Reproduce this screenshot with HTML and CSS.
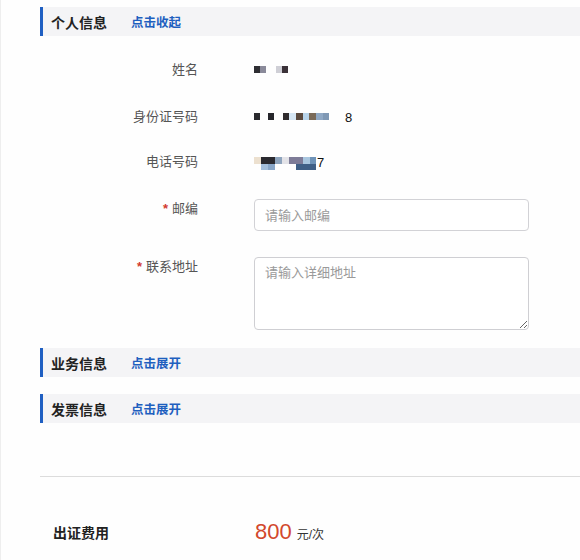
FILE: index.html
```html
<!DOCTYPE html>
<html lang="zh-CN">
<head>
<meta charset="utf-8">
<title>个人信息</title>
<link rel="stylesheet" href="styles.css">
</head>
<body>
<div class="page">
  <div class="sec-head first">
    <span class="sec-title">个人信息</span>
    <a class="sec-link">点击收起</a>
  </div>

  <div class="form">
    <div class="row r1">
      <div class="label">姓名</div>
      <div class="value">
        <svg width="40" height="8" viewBox="0 0 40 8" class="mosaic">
          <rect x="0" y="0" width="6" height="7" fill="#2e2e33"/>
          <rect x="6" y="0" width="6" height="7" fill="#8a8a9a"/>
          <rect x="22" y="0" width="6" height="7" fill="#cfcfd6"/>
          <rect x="28" y="0" width="6" height="7" fill="#3b3238"/>
        </svg>
      </div>
    </div>
    <div class="row r2">
      <div class="label">身份证号码</div>
      <div class="value">
        <svg width="76" height="8" viewBox="0 0 76 8" class="mosaic">
          <rect x="0" y="0" width="6" height="7" fill="#2a2a2e"/>
          <rect x="14" y="0" width="6" height="7" fill="#26262b"/>
          <rect x="29" y="0" width="6" height="7" fill="#2f2b2d"/>
          <rect x="35" y="0" width="7" height="7" fill="#d6e6f3"/>
          <rect x="42" y="0" width="7" height="7" fill="#5b4a3e"/>
          <rect x="49" y="0" width="6" height="7" fill="#b8d4ea"/>
          <rect x="55" y="0" width="7" height="7" fill="#7a6a58"/>
          <rect x="62" y="0" width="7" height="7" fill="#8fa8c4"/>
          <rect x="69" y="0" width="6" height="7" fill="#7f98b4"/>
        </svg>
        <span class="digit d8">8</span>
      </div>
    </div>
    <div class="row r3">
      <div class="label">电话号码</div>
      <div class="value">
        <svg width="62" height="14" viewBox="0 0 62 14" class="mosaic">
          <rect x="0" y="0" width="7" height="7" fill="#ece0cf"/>
          <rect x="7" y="0" width="14" height="7" fill="#2a2a30"/>
          <rect x="21" y="0" width="7" height="7" fill="#8ea4bd"/>
          <rect x="28" y="0" width="7" height="7" fill="#e3e3e8"/>
          <rect x="35" y="0" width="14" height="7" fill="#7e7c98"/>
          <rect x="49" y="0" width="7" height="7" fill="#a9c6df"/>
          <rect x="56" y="0" width="6" height="7" fill="#6f93b8"/>
          <rect x="7" y="7" width="7" height="6" fill="#a4bfdc"/>
          <rect x="14" y="7" width="7" height="6" fill="#88a6c8"/>
          <rect x="42" y="7" width="20" height="6" fill="#3f5f86"/>
        </svg>
        <span class="digit d7">7</span>
      </div>
    </div>
    <div class="row r4">
      <div class="label"><span class="req">*</span>邮编</div>
      <div class="value">
        <input class="text-input" type="text" placeholder="请输入邮编">
      </div>
    </div>
    <div class="row r5">
      <div class="label"><span class="req">*</span>联系地址</div>
      <div class="value">
        <textarea class="text-area" placeholder="请输入详细地址"></textarea>
      </div>
    </div>
  </div>

  <div class="sec-head second">
    <span class="sec-title">业务信息</span>
    <a class="sec-link">点击展开</a>
  </div>
  <div class="sec-head third">
    <span class="sec-title">发票信息</span>
    <a class="sec-link">点击展开</a>
  </div>

  <div class="divider"></div>

  <div class="fee">
    <div class="fee-label">出证费用</div>
    <div class="fee-value"><span class="amount">800</span><span class="unit">元/次</span></div>
  </div>
</div>
</body>
</html>
```

FILE: styles.css
```css
html, body {
  margin: 0;
  padding: 0;
  background: #fefefe;
}
body {
  width: 580px;
  height: 560px;
  overflow: hidden;
  border-left: 1px solid #eeeeee;
  box-sizing: border-box;
  font-family: "Liberation Sans", "Noto Sans CJK SC", sans-serif;
  color: #333;
}
.page {
  padding-left: 39px;
  padding-top: 7px;
}
.sec-head {
  height: 29px;
  display: flex;
  align-items: center;
  border-left: 3px solid #1f5fc2;
  background: #f4f4f6;
  box-sizing: border-box;
}
.sec-head.second {
  margin-top: 18px;
}
.sec-head.third {
  margin-top: 17px;
}
.sec-title {
  margin-left: 8px;
  font-size: 14px;
  font-weight: bold;
  color: #222;
  width: 80px;
}
.sec-link {
  font-size: 12.5px;
  font-weight: bold;
  color: #1e5fbf;
  cursor: pointer;
}
.form {
  padding-top: 24px;
}
.row {
  display: grid;
  grid-template-columns: 158px 275px;
  column-gap: 56px;
  align-items: start;
}
.label {
  text-align: right;
  font-size: 13px;
  line-height: 20px;
  color: #555;
}
.r2 { margin-top: 27px; }
.r3 { margin-top: 25px; }
.r4 { margin-top: 27px; }
.r5 { margin-top: 26px; }
.req {
  color: #d23a2e;
  font-weight: bold;
  margin-right: 4px;
}
.value {
  display: flex;
  align-items: center;
  height: 20px;
  font-size: 13px;
}
.r4 .value, .r5 .value {
  height: auto;
}
.mosaic {
  display: block;
}
.r3 .mosaic {
  margin-top: 4px;
}
.digit {
  font-size: 13px;
  color: #111;
}
.d8 { margin-left: 15px; }
.d7 { margin-left: 1px; }
.text-input {
  width: 275px;
  height: 32px;
  box-sizing: border-box;
  border: 1px solid #d2d2d6;
  border-radius: 4px;
  padding: 0 10px;
  font-family: "Liberation Sans", "Noto Sans CJK SC", sans-serif;
  font-size: 13px;
  background: #fff;
  outline: none;
}
.text-area {
  width: 275px;
  height: 73px;
  box-sizing: border-box;
  border: 1px solid #cfcfd3;
  border-radius: 4px;
  padding: 6px 10px;
  font-family: "Liberation Sans", "Noto Sans CJK SC", sans-serif;
  font-size: 13px;
  line-height: 18px;
  background: #fff;
  outline: none;
  resize: vertical;
  display: block;
}
.text-input::placeholder,
.text-area::placeholder {
  color: #9a9a9a;
}
.divider {
  margin-top: 53px;
  height: 0;
  border-top: 1px solid #dcdcdc;
}
.fee {
  display: flex;
  align-items: center;
  margin-top: 41px;
  height: 28px;
}
.fee-label {
  margin-left: 13px;
  width: 202px;
  font-size: 14px;
  font-weight: bold;
  color: #222;
}
.fee-value {
  display: flex;
  align-items: baseline;
}
.amount {
  font-size: 22px;
  color: #d2482c;
}
.unit {
  margin-left: 5px;
  font-size: 12px;
  color: #333;
}
```
